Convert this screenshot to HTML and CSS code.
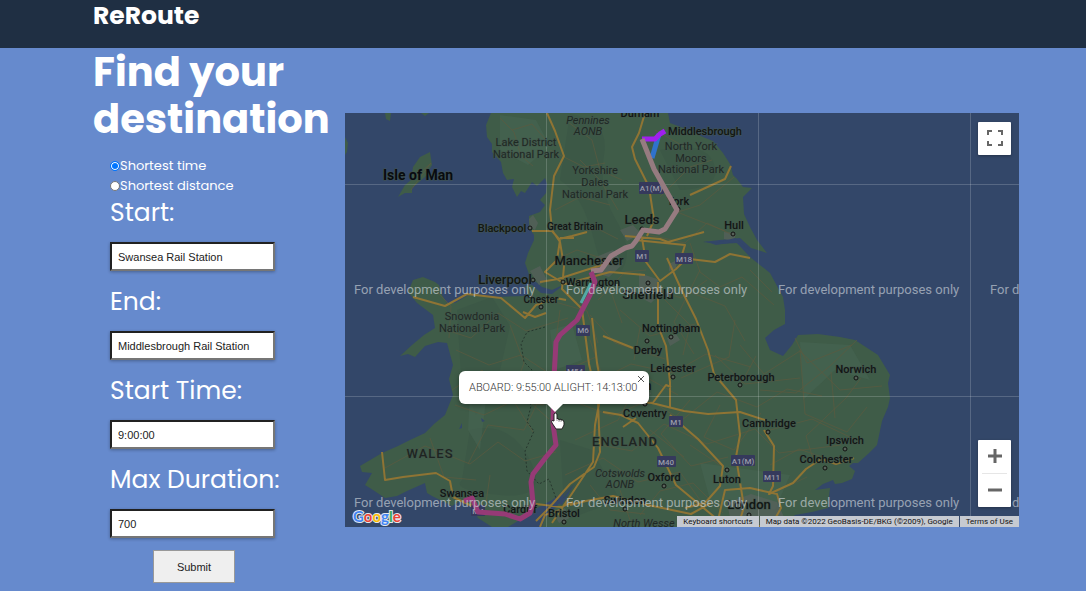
FILE: index.html
```html
<!DOCTYPE html>
<html lang="en">
<head>
<meta charset="utf-8">
<title>ReRoute</title>
<link rel="stylesheet" href="styles.css">
</head>
<body>
<header class="topbar"><span class="brand">ReRoute</span></header>
<main class="planner">
  <section class="search">
    <h1 class="title">Find your destination</h1>
    <form class="form">
      <label class="option"><input class="radio" type="radio" name="mode" checked>Shortest time</label>
      <label class="option"><input class="radio" type="radio" name="mode">Shortest distance</label>
      <label class="label" for="start">Start:</label>
      <input class="field" id="start" type="text" value="Swansea Rail Station">
      <label class="label" for="end">End:</label>
      <input class="field" id="end" type="text" value="Middlesbrough Rail Station">
      <label class="label" for="time">Start Time:</label>
      <input class="field" id="time" type="text" value="9:00:00">
      <label class="label" for="duration">Max Duration:</label>
      <input class="field" id="duration" type="text" value="700">
      <button class="submit" type="button">Submit</button>
    </form>
  </section>
  <section class="map" aria-label="Map">
    <svg class="canvas" viewBox="345 113 674 414" preserveAspectRatio="xMinYMin slice">
      <rect class="sea" x="345" y="113" width="1400" height="900"/>
      <!-- Land -->
      <path class="land" d="M491 113L486 125 487 137 492 144 492 152 501 162 503 173 507 180 514 179 512 187 517 197 521 191 525 193 532 182 537 186 545 178 547 184 546 193 540 200 545 205 540 212 529 216 529 228 534 235 534 240 528 253 525 263 530 277 542 287 552 290 565 284 552 294 541 293 532 285 525 286 529 299 523 296 498 297 484 296 472 293 455 303 447 303 442 295 439 285 435 282 423 277 413 280 408 292 417 303 433 315 435 328 424 335 412 345 400 356 408 354 415 357 425 346 438 342 447 343 453 365 449 379 453 395 445 415 434 424 425 433 410 440 398 446 382 453 360 466 362 472 372 473 365 485 373 490 385 498 397 496 407 491 425 483 427 493 432 496 452 506 462 500 472 508 478 518 492 527H508L518 521 525 519 532 511 552 500 573 485 572 488 558 505 545 518 542 527H780L795 515 812 512 828 508 829 496 830 488 815 490 823 484 833 480 835 484 842 483 852 479 855 471 849 466 853 463 858 463 868 454 877 445 882 421 888 407 890 398 888 383 890 375 878 355 855 340 840 337 818 334 798 335 792 345 783 356 770 350 765 338 774 330 785 324 785 310 783 297 770 273 750 257 737 243 720 244 703 242 720 240 740 238 751 248 767 253 757 240 750 227 744 214 743 197 752 188 743 187 737 179 733 175 730 164 723 153 713 141 703 137 686 129 670 123 668 113Z"/>
      <path class="land" d="M430 152L432 165 425 177 412 188 412 193 405 193 398 197 405 185 411 180 413 167 420 157ZM345 137L348 143 347 152 345 155ZM385 113H391L390 121 386 119ZM421 113H429L425 116Z"/>
      <!-- Hills and forests -->
      <path class="hill" d="M570 114Q610 120 604 155T616 220 622 270Q605 285 594 240T560 180ZM457 310L492 297 510 326 500 370 476 415 461 375ZM660 150Q705 140 714 164T680 190ZM470 430Q510 420 530 460T500 495 462 480ZM560 440L592 450 620 500 565 520Z"/>
      <path class="hill pale" d="M500 115L536 120 550 146 528 165 500 150ZM800 342L850 345 870 380 835 370 803 400ZM470 390L486 400 480 450 468 430ZM700 463L790 475 775 510 710 500ZM550 330L572 324 582 360 555 370Z"/>
      <path class="city" d="M620 230l13-5 8 9-14 7zM596 257l17-7 10 14-14 13-13-4zM530 271l10-5 7 14-8 5zM639 273l18 6 6 12-12 12-12-6zM669 264l8-4-1 8-7 3zM724 232l12 1-2 8-10-2zM617 390l18-6 16 9-6 12-20-1zM727 503l24-9 26 8 7 15-20 8-33-3zM529 219l4-4 5 8-3 7-5-3zM667 338l9-4 4 6-10 6zM553 512l12-4 5 10-11 5z"/>
      <path class="water" d="M704 241L716 243 735 238 752 252 735 242 716 245ZM462 423l-3 6 3-1zM575 483l-16 21 3 1zM481 418l4 3-3 1z"/>
      <!-- Minor roads -->
      <path class="minor" d="M500 118l14 14 7 24 12 10M512 130l20-6 13 15M568 122l24 18 8 30 22 10M580 160l20 20 18 30M650 235l35 8 22-20 28 13M675 213l25-8 34-28M677 212l48 19M660 197l30-30 22-7M690 243l10 29 20 15 22-10 32 28M690 292l35 14 20 35M700 270l-26 52 20 32M645 286l36 12 26-18M620 310l30 26 45-12M590 315l25 28 50 16M440 328l31 10 27-25 28 18 42-13M456 350l33 15 32-10 32 21 43-19M452 390l30-20 22 30 40 5M455 405l29 10 39-19 26 23M385 468l40-22 45 18 28-22 27 19 31-9M468 464l20-39 36 5 22-44M430 438l14 39 32 3M490 475l-4 28M510 325l14 38-13 34 22 35M560 310l-8 60M570 400l42 16 37-16 33 20 35-28 40 15 30-18 35 7M590 340l13 38 28-14 42 9 33-19 45 13M600 445l32 6 32-27 43 20 48-15 24 24 62-8M575 440l43-20 24-45 36 20M640 328l-6 32M690 400l-29 34 30 32 37-9M720 405l-16 32 30 13 27-37M565 475l38-17 35 24 42-10 20 28M590 485l20 25 35 4M640 515l20-24 33-8 30 30M740 345l24 29 36-23 40 39 42-4M795 338l12 25 45-18M800 350l5 64 42 18 20-25M760 390l36 3 34-27 27-26M835 418l-4-46M770 430l42-11 42 20M815 465l-9-29 40-38 15-20M770 465l29-16 23 8M550 150l34 17 21-4M555 210l25-13 30 8M566 239l30-11 22 11M555 260l22-10 30 10M411 190l20-27-14 13M435 290l16 16-2 32M548 300l39 11 11 32M598 300l27-28 21-2M609 286l13 37M665 300l25 25-7 30M655 130l35 20M735 320l-6 37-48 21M750 270l22 22M620 490l11 33M690 445l30 20M775 492l32-15M756 356l-15 28M715 355l30 29 55-6M650 430l34 27"/>
      <path class="border" d="M545 327l-18 5-6 12 3 18 8 8-6 23 5 13-4 16 7 9-9 20 2 20 12 13 10-5 8 22"/>
      <!-- Motorways and main roads -->
      <path class="road" d="M547 113l8 18 9 25-10 20-4 34 2 20 8 12 4 24-2 23 20 20 7 55 9 38 2 50-6 15-24 17-22 25-12 12M532 231h20l7 8 13-3 15-4M560 238h14M560 240l-3 20-12 12 20 12 45-12 35 3M540 282l18-3 50-16M413 297l32 9 22-12 34 4 24 20 11-13 20-7 10 2M523 312l12 5 11-4M645 113l-6 20-7 14 3 12 14 28 5 33-7 16M625 236l35 3 8 3 36-10M635 240l50 5-4 13 34 4 15-8 20 4M642 238l4 24 14 19 16-12 12-12M667 258l15 33 14 28 12 31 6 24 22 26 4 35-4 22 8 50-5 16M658 282v44l8 20 4 36v26M592 318l5 45 7 37 48 3 32 8 24 3 32-2 25 8M603 412l18 3 17 8 20 25 18 37 42 35 10 30M670 415l28 24 25 27-3 20-15 17-20 5M725 490l25-2 27 6 4 14-10 18h-40l-12-10zM764 430l10 16-1 40-4 8 24-11 13-14 15-10 15 5 18-6M570 505l16-4 27-5 35 9 43 9 20-11M540 527l5-12 18-6M536 504l25 3 12-5M382 452l3 28 18-3 33-4 14 8 3 16 25 12M600 399l-5 26-2 37-24 36-7 10-10 15M636 418l-13 9M652 404l14-19 5 2M603 336l30 12M690 195l35-16 6-13"/>
      <path class="grid" d="M546.500 113V527M758.500 113V527M970.500 113V527M345 184.500H1019M345 396.500H1019"/>
      <!-- Road shields -->
      <g class="shield">
        <rect x="639" y="182" width="25" height="12"/><text x="651" y="191">A1(M)</text>
        <rect x="635" y="250" width="14" height="12"/><text x="642" y="259">M1</text>
        <rect x="675" y="253" width="18" height="11"/><text x="684" y="262">M18</text>
        <rect x="576" y="325" width="14" height="11"/><text x="583" y="333">M6</text>
        <rect x="566" y="365" width="19" height="11"/><text x="575" y="374">M54</text>
        <rect x="669" y="416" width="14" height="11"/><text x="676" y="425">M1</text>
        <rect x="657" y="456" width="19" height="11"/><text x="666" y="465">M40</text>
        <rect x="731" y="455" width="24" height="11"/><text x="743" y="464">A1(M)</text>
        <rect x="763" y="471" width="18" height="11"/><text x="772" y="480">M11</text>
        <rect x="471" y="505" width="14" height="11"/><text x="478" y="514">M4</text>
      </g>
      <!-- Places -->
      <g class="dots">
        <circle cx="530" cy="228" r="2"/><circle cx="533" cy="280" r="2"/><circle cx="541" cy="307" r="2"/><circle cx="563" cy="282" r="2"/><circle cx="678" cy="209" r="2"/><circle cx="733" cy="234" r="2"/><circle cx="642" cy="229" r="2"/><circle cx="648" cy="283" r="2"/><circle cx="671" cy="337" r="2"/><circle cx="647" cy="341" r="2"/><circle cx="673" cy="377" r="2"/><circle cx="740" cy="385" r="2"/><circle cx="856" cy="378" r="2"/><circle cx="768" cy="432" r="2"/><circle cx="845" cy="449" r="2"/><circle cx="825" cy="468" r="2"/><circle cx="727" cy="470" r="2"/><circle cx="664" cy="486" r="2"/><circle cx="749" cy="515" r="2"/><circle cx="564" cy="522" r="2"/><circle cx="625" cy="509" r="2"/><circle cx="645" cy="404" r="2"/>
      </g>
      <g class="park">
        <text x="526" y="146">Lake District</text><text x="526" y="158">National Park</text>
        <text x="691" y="150">North York</text><text x="691" y="162">Moors</text><text x="691" y="173">National Park</text>
        <text x="595" y="174">Yorkshire</text><text x="595" y="186">Dales</text><text x="595" y="198">National Park</text>
        <text x="472" y="320">Snowdonia</text><text x="472" y="332">National Park</text>
        <g class="italic"><text x="588" y="124">Pennines</text><text x="588" y="135">AONB</text><text x="620" y="477">Cotswolds</text><text x="620" y="488">AONB</text><text x="644" y="527">North Wesse</text></g>
      </g>
      <g class="place">
        <text x="640" y="117">Durham</text><text x="705" y="135">Middlesbrough</text><text x="678" y="205">York</text><text x="734" y="229">Hull</text><text x="502" y="232">Blackpool</text><text class="small" x="575" y="230">Great Britain</text><text class="small" x="541" y="303">Chester</text><text x="593" y="286">Warrington</text><text x="671" y="332">Nottingham</text><text x="648" y="354">Derby</text><text x="673" y="372">Leicester</text><text x="741" y="381">Peterborough</text><text x="856" y="373">Norwich</text><text x="645" y="417">Coventry</text><text x="769" y="427">Cambridge</text><text x="845" y="444">Ipswich</text><text x="826" y="463">Colchester</text><text x="727" y="483">Luton</text><text x="664" y="481">Oxford</text><text x="625" y="504">Swindon</text><text x="462" y="497">Swansea</text><text x="520" y="513">Cardiff</text><text x="564" y="517">Bristol</text>
      </g>
      <g class="place large">
        <text x="642" y="224">Leeds</text><text x="589" y="265">Manchester</text><text x="505" y="284">Liverpool</text><text x="648" y="299">Sheffield</text><text x="749" y="509">London</text>
        <text x="646" y="390">m</text>
      </g>
      <text class="island" x="418" y="180">Isle of Man</text>
      <g class="country"><text x="430" y="458">WALES</text><text x="625" y="446">ENGLAND</text></g>
      <!-- Routes -->
      <path class="route blue" d="M659 134L652 158"/>
      <path class="route aqua" d="M591 283L581 303"/>
      <path class="route violet" d="M642 139H655L660 134 665 131"/>
      <path class="route rose" d="M642 139L654 169 677 210 665 229 659 232 643 230 636 241 632 246 625 248 611 256 601 270 591 271"/>
      <path class="route magenta" d="M591 272L595 282 590 295 577 320 560 335 556 342 554 378 553 424 556 445 546 457 533 474 531 482 533 503 530 513 520 519 505 514 478 512 472 498 464 501"/>
      <!-- Watermark -->
      <g class="watermark"><text x="354" y="294">For development purposes only</text><text x="566" y="294">For development purposes only</text><text x="778" y="294">For development purposes only</text><text x="990" y="294">For development purposes only</text><text x="354" y="507">For development purposes only</text><text x="566" y="507">For development purposes only</text><text x="778" y="507">For development purposes only</text><text x="990" y="507">For development purposes only</text></g>
      <text class="google" x="353" y="522"><tspan fill="#4285f4">G</tspan><tspan fill="#ea4335">o</tspan><tspan fill="#fbbc05">o</tspan><tspan fill="#4285f4">g</tspan><tspan fill="#34a853">l</tspan><tspan fill="#ea4335">e</tspan></text>
    </svg>
    <div class="popup">ABOARD: 9:55:00 ALIGHT: 14:13:00<button class="close" type="button" aria-label="Close"><svg viewBox="0 0 8 8" width="8" height="8"><path d="M1 1L7 7M7 1L1 7" stroke="#555" fill="none"/></svg></button></div>
    <svg class="pointer" viewBox="0 0 14 18" width="14" height="18"><path d="M3 9V2Q4 0 6 2V7L7 6 8 8 10 7 10 8 12 8 13 10V13L11 17H5L1 11Q0 9 1 8.500Z" fill="#fff" stroke="#222"/><path d="M6 7V9M8 8V10M10 8V10" stroke="#555" stroke-width=".6"/></svg>
    <button class="fullscreen" type="button" aria-label="Toggle fullscreen"><svg viewBox="0 0 16 16" width="16" height="16"><path d="M1 5V1H5M11 1H15V5M15 11V15H11M5 15H1V11" fill="none" stroke="#666" stroke-width="2"/></svg></button>
    <div class="zoom">
      <button class="step" type="button" aria-label="Zoom in"><svg viewBox="0 0 16 16" width="16" height="16"><path d="M1 8H15M8 1V15" stroke="#666" stroke-width="3"/></svg></button>
      <button class="step" type="button" aria-label="Zoom out"><svg viewBox="0 0 16 16" width="16" height="16"><path d="M1 8H15" stroke="#666" stroke-width="3"/></svg></button>
    </div>
    <div class="credits"><button class="credit" type="button">Keyboard shortcuts</button><span class="credit">Map data ©2022 GeoBasis-DE/BKG (©2009), Google</span><a class="credit" href="#">Terms of Use</a></div>
  </section>
</main>
</body>
</html>
```
FILE: styles.css
```css
* { box-sizing: border-box; }
body { margin: 0; background: #fff; font-family: Poppins, Inter, sans-serif; color: #fff; }
.topbar { background: #1f2f43; padding: 0 93px 16px; }
.brand { display: block; font-size: 25px; line-height: 32px; font-weight: 700; }
.planner { display: flex; align-items: center; background: #668acd; padding: 0 67px 0 93px; }
.search { flex: 0 0 252px; }
.title { margin: 0; padding-top: 1px; font-size: 40px; line-height: 47px; font-weight: 700; }
.form { display: flex; flex-direction: column; align-items: flex-start; padding: 13px 0 8px 17px; }
.option { display: flex; align-items: center; font-size: 13px; line-height: 20px; }
.radio { appearance: none; width: 10px; height: 10px; margin: 0; border: 1px solid #777; border-radius: 50%; background: #fff; }
.radio:checked { border-color: #0075ff; background: #0075ff; box-shadow: inset 0 0 0 1px #fff; }
.label { font-size: 25px; line-height: 34px; white-space: nowrap; }
.field { width: 165px; height: 29px; margin: 12px 0 14px; padding: 0 6px; border: 2px inset #767676; background: #fff; color: #222; font: 11px "Liberation Sans", Arial, sans-serif; box-shadow: 0 1px 3px rgba(0, 0, 0, .3); }
.submit { width: 82px; height: 33px; margin: -2px 0 0 43px; border: 1px solid #999; background: #efefef; color: #222; font: 11px "Liberation Sans", Arial, sans-serif; }

.map { position: relative; flex: 1; height: 414px; overflow: hidden; font-family: Roboto, sans-serif; }
.canvas { display: block; width: 100%; height: 100%; }
.sea, .water { fill: #334769; }
.land { fill: #3f5c48; }
.hill { fill: #3a5546; opacity: .6; }
.pale { fill: #486653; opacity: .5; }
.city { fill: #59615d; opacity: .7; }
.minor { fill: none; stroke: #5c5a3e; stroke-width: 1; opacity: .7; stroke-linejoin: round; }
.border { fill: none; stroke: #26362d; stroke-dasharray: 2 2; }
.road { fill: none; stroke: #8f7434; stroke-width: 2; stroke-linejoin: round; }
.grid { fill: none; stroke: #fff; opacity: .18; }
.shield rect { fill: #35395c; rx: 1px; }
.shield text { fill: #999ba9; font-size: 8px; font-weight: 500; text-anchor: middle; }
.dots circle { fill: #576159; stroke: #111; stroke-width: 1; }
.park text, .place text, .country text, .island { text-anchor: middle; paint-order: stroke; stroke: #42554c; stroke-width: 1; }
.park { fill: #1e2923; font-size: 11px; }
.italic { font-style: italic; }
.place { fill: #121614; font-size: 11px; font-weight: 500; }
.small { font-size: 10px; }
.large { font-size: 13px; }
.island { fill: #080b10; font-size: 14px; font-weight: 700; }
.country { fill: #1e2521; font-size: 13px; font-weight: 500; letter-spacing: 1px; }
.route { fill: none; stroke-width: 5; stroke-linejoin: round; }
.blue { stroke: #2f72cb; }
.aqua { stroke: #52a9a6; stroke-width: 3; }
.rose { stroke: #967b80; }
.violet { stroke: #a020ed; }
.magenta { stroke: #963a76; }
.watermark { fill: #d8dee2; opacity: .6; font-size: 13px; }
.google { font: 700 15px Lato, sans-serif; paint-order: stroke; stroke: #e4e8ee; stroke-width: 2; }

.popup { position: absolute; left: 114px; top: 258px; width: 190px; height: 33px; border-radius: 6px; background: #fff; color: #333; font-size: 11px; font-weight: 300; line-height: 33px; padding-left: 10px; white-space: nowrap; box-shadow: 0 2px 5px rgba(0, 0, 0, .35); }
.popup::after { content: ""; position: absolute; left: 87px; top: 32px; border: 9px solid transparent; border-top-color: #fff; border-bottom: 0; }
.close { position: absolute; right: 4px; top: 4px; display: flex; padding: 0; border: 0; background: none; }
.pointer { position: absolute; left: 206px; top: 299px; }
.fullscreen, .zoom { position: absolute; right: 8px; width: 33px; background: #fff; border: 0; border-radius: 1px; box-shadow: 0 1px 3px rgba(0, 0, 0, .3); }
.fullscreen { top: 9px; height: 33px; display: grid; place-items: center; padding: 0; }
.zoom { bottom: 20px; }
.step { display: grid; place-items: center; width: 25px; height: 33px; margin: 0 4px; padding: 0; border: 0; background: none; }
.step + .step { border-top: 1px solid #e6e6e6; height: 34px; }
.credits { position: absolute; right: 0; bottom: 0; display: flex; gap: 1px; font-size: 8px; line-height: 11px; white-space: nowrap; }
.credit { padding: 0 6px; border: 0; background: #c6cad1; color: #111; font: inherit; text-decoration: none; }
```
